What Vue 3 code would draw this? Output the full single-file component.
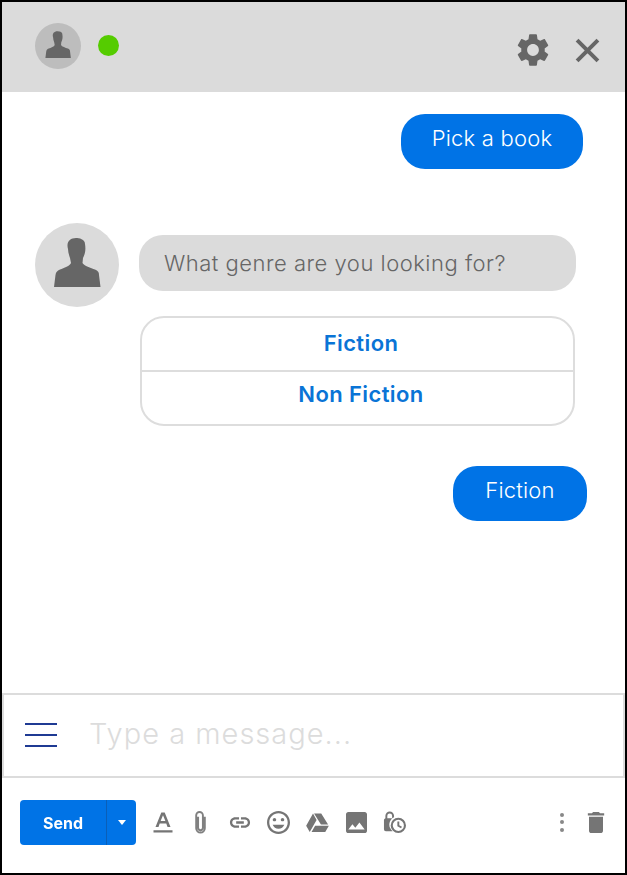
<template>
  <div class="chat">
    <header class="topbar">
      <div class="status">
        <div class="avatar small">
          <svg viewBox="0 0 84 84"><path :d="personPath" /></svg>
        </div>
        <span class="dot"></span>
      </div>
      <div class="actions">
        <svg class="gear" viewBox="2.2 2.2 19.6 19.6"><path :d="gearPath" /></svg>
        <svg class="close" viewBox="0 0 24 24"><path d="M2 2 L22 22 M22 2 L2 22" /></svg>
      </div>
    </header>

    <main class="messages">
      <div class="bubble mine first">{{ firstMessage }}</div>

      <div class="bot-row">
        <div class="avatar">
          <svg viewBox="0 0 84 84"><path :d="personPath" /></svg>
        </div>
        <div class="bot-col">
          <div class="bubble bot">What genre are you looking for?</div>
          <div class="options">
            <button v-for="opt in options" :key="opt" class="option">{{ opt }}</button>
          </div>
        </div>
      </div>

      <div class="bubble mine second">Fiction</div>
    </main>

    <div class="composer">
      <div class="burger"><span></span><span></span><span></span></div>
      <input class="field" placeholder="Type a message..." />
    </div>

    <footer class="toolbar">
      <div class="send">
        <span class="send-label">Send</span>
        <span class="send-arrow"><i></i></span>
      </div>
      <div class="tools">
        <svg style="width:20px" viewBox="0 0 20 22"><path d="M8.3 1h3.400l5.800 14.500h-3L13.300 12H6.700l-1.200 3.500h-3zM7.600 9.600h4.800L10 3.800zM0.500 18.800h19v2.200H0.500z" /></svg>
        <svg style="width:13px;margin-left:21px" viewBox="0 0 13 24"><path class="line" d="M4 6v11.500a2.500 2.500 0 0 0 5 0V4.500a3.500 3.500 0 0 0-7 0V18a4.500 4.500 0 0 0 9 0V6" /></svg>
        <svg style="width:24px;margin-left:21px" viewBox="0 0 24 24"><path d="M3.900 12c0-1.710 1.390-3.100 3.100-3.100h4V6.500H7c-3 0-5.500 2.500-5.500 5.500s2.500 5.500 5.500 5.500h4v-2.400H7c-1.710 0-3.100-1.390-3.100-3.100zM8 13.200h8v-2.400H8zM17 6.500h-4v2.400h4c1.710 0 3.100 1.390 3.100 3.100s-1.390 3.100-3.100 3.100h-4v2.400h4c3 0 5.500-2.500 5.500-5.500S20 6.500 17 6.500z" /></svg>
        <svg style="width:23px;margin-left:15px" viewBox="2 2 20 20"><path d="M11.990 2C6.470 2 2 6.480 2 12s4.470 10 9.990 10C17.520 22 22 17.520 22 12S17.520 2 11.990 2zM12 20c-4.420 0-8-3.580-8-8s3.580-8 8-8 8 3.580 8 8-3.580 8-8 8zm3.500-9c.83 0 1.500-.67 1.500-1.500S16.330 8 15.500 8 14 8.670 14 9.500s.67 1.500 1.500 1.500zm-7 0c.83 0 1.500-.67 1.500-1.500S9.330 8 8.500 8 7 8.670 7 9.500 7.670 11 8.500 11zm3.500 6.500c2.330 0 4.310-1.460 5.110-3.500H6.890c.8 2.040 2.780 3.500 5.110 3.500z" /></svg>
        <svg style="width:23px;margin-left:16px" viewBox="1 2 22 20"><path d="M7.710 3.500L1.150 15l3.430 6 6.550-11.500zM9.730 15L6.300 21h13.120l3.430-6zm12.390-1L15.570 3.500H8.700L15.290 14z" /></svg>
        <svg style="width:21px;margin-left:17px" viewBox="3 3 18 18"><path d="M21 19V5c0-1.100-.9-2-2-2H5c-1.100 0-2 .9-2 2v14c0 1.100.9 2 2 2h14c1.100 0 2-.9 2-2zM8.500 13.500l2.500 3.010L14.500 12l4.500 6H5z" /></svg>
        <svg style="width:23px;margin-left:16px" viewBox="0 0 24 24"><path fill-rule="evenodd" d="M7 0.500a4.500 4.500 0 0 1 4.500 4.500V6.500A8.500 8.500 0 0 0 10 21H3a2 2 0 0 1-2-2V9.500a2 2 0 0 1 1.500-1.900V5A4.500 4.500 0 0 1 7 0.500zM7 2.500A2.500 2.500 0 0 0 4.500 5v2.500h5V5A2.500 2.500 0 0 0 7 2.500z" /><path fill-rule="evenodd" d="M16 7a8 8 0 1 0 0 16 8 8 0 0 0 0-16zm0 2.200a5.800 5.800 0 1 1 0 11.600 5.800 5.800 0 0 1 0-11.600zM15 11v4.800l3.800 2.200 1-1.600-2.800-1.600V11z" /></svg>
      </div>
      <div class="tail">
        <div class="more"><span></span><span></span><span></span></div>
        <svg class="trash" viewBox="5 3 14 18"><path d="M6 19c0 1.100.9 2 2 2h8c1.100 0 2-.9 2-2V7H6v12zM19 4h-3.500l-1-1h-5l-1 1H5v2h14V4z" /></svg>
      </div>
    </footer>
  </div>
</template>

<script setup>
const firstMessage = 'Pick a book'
const options = ['Fiction', 'Non Fiction']

const personPath = 'M33 26C31 19 35 15 41 15C44 15 50 16 50 21C51 27 50 31 48 35L47.500 40C49 43 56 45 60 46.500C63 48 64 49 64 52L65.500 64H19L20.500 52C21 49 22 48 25 46.500C29 45 35 43 36 40L35 35C34 32 33 29 33 26Z'
const gearPath = 'M19.140 12.940c.04-.3.06-.61.06-.94 0-.32-.02-.64-.07-.94l2.030-1.580c.18-.14.23-.41.12-.61l-1.920-3.320c-.12-.22-.37-.29-.59-.22l-2.390.96c-.5-.38-1.030-.7-1.620-.94L14.400 2.810c-.04-.24-.24-.41-.48-.41h-3.840c-.24 0-.43.17-.47.41L9.250 5.350c-.59.24-1.130.57-1.620.94l-2.390-.96c-.22-.08-.47 0-.59.22L2.740 8.870c-.12.21-.08.47.12.61l2.030 1.580c-.05.3-.09.63-.09.94s.02.64.07.94l-2.030 1.580c-.18.14-.23.41-.12.61l1.920 3.320c.12.22.37.29.59.22l2.390-.96c.5.38 1.030.7 1.620.94l.36 2.540c.05.24.24.41.48.41h3.840c.24 0 .44-.17.47-.41l.36-2.540c.59-.24 1.130-.56 1.620-.94l2.390.96c.22.08.47 0 .59-.22l1.920-3.320c.12-.22.07-.47-.12-.61l-2.010-1.580zM12 15.600c-1.980 0-3.600-1.620-3.600-3.600s1.620-3.600 3.600-3.600 3.600 1.620 3.600 3.600-1.620 3.600-3.600 3.600z'
</script>

<style>
html, body {
  margin: 0;
  background: #fff;
}
</style>

<style scoped>
.chat {
  width: 627px;
  height: 875px;
  box-sizing: border-box;
  border: 2px solid #000;
  display: flex;
  flex-direction: column;
  font-family: "Inter", "Open Sans", sans-serif;
  background: #fff;
  overflow: hidden;
}
.topbar {
  height: 90px;
  background: #dbdbdb;
  display: flex;
  justify-content: space-between;
  padding: 21px 25px 0 33px;
  box-sizing: border-box;
  flex: none;
}
.status {
  display: flex;
  align-items: flex-start;
  gap: 17px;
}
.avatar {
  width: 84px;
  height: 84px;
  border-radius: 50%;
  background: #dbdbdb;
  flex: none;
}
.avatar svg {
  display: block;
  width: 100%;
  height: 100%;
  fill: #666;
}
.avatar.small {
  width: 46px;
  height: 46px;
  background: #bdbdbd;
}
.dot {
  width: 21px;
  height: 21px;
  margin-top: 12px;
  border-radius: 50%;
  background: #55cc00;
}
.actions {
  display: flex;
  align-items: center;
  gap: 26px;
  height: 44px;
  margin-top: 5px;
}
.gear {
  width: 32px;
  height: 32px;
  fill: #666;
}
.close {
  width: 25px;
  height: 25px;
  fill: none;
  stroke: #666;
  stroke-width: 3.800;
}
.messages {
  flex: 1;
  min-height: 0;
  display: flex;
  flex-direction: column;
  padding-top: 22px;
}
.bubble {
  height: 55px;
  box-sizing: border-box;
  border-radius: 24px;
  display: flex;
  align-items: center;
  font-size: 22px;
  font-weight: 300;
}
.mine {
  background: #0073e6;
  color: #fff;
  align-self: flex-end;
  justify-content: center;
  padding-bottom: 7px;
  letter-spacing: 0.2px;
}
.first {
  width: 182px;
  margin-right: 42px;
}
.second {
  width: 134px;
  margin-right: 38px;
  margin-top: 40px;
}
.bot-row {
  display: flex;
  gap: 20px;
  margin: 54px 0 0 33px;
}
.bot-col {
  padding-top: 12px;
  width: 437px;
}
.bot {
  background: #dbdbdb;
  color: #666;
  padding: 0 0 0 25px;
  height: 56px;
  letter-spacing: 0.5px;
}
.options {
  margin: 25px 1px 0;
  border: 2px solid #dddddd;
  border-radius: 24px;
  height: 110px;
  box-sizing: border-box;
  display: flex;
  flex-direction: column;
}
.option {
  height: 52px;
  flex: none;
  box-sizing: border-box;
  border: 0;
  background: none;
  font: 600 22px "Inter", "Open Sans", sans-serif;
  letter-spacing: 0.4px;
  color: #0a74d6;
  padding: 0 0 3px 7px;
}
.option + .option {
  height: 54px;
  border-top: 2px solid #dddddd;
  padding-bottom: 9px;
}
.composer {
  height: 85px;
  flex: none;
  box-sizing: border-box;
  border: 2px solid #dcdcdc;
  display: flex;
  align-items: center;
  padding-left: 21px;
}
.burger {
  width: 32px;
  display: flex;
  flex-direction: column;
  gap: 9px;
  flex: none;
  margin-bottom: 2px;
}
.burger span {
  display: block;
  height: 2px;
  background: #1f3a93;
}
.field {
  flex: 1;
  border: 0;
  outline: 0;
  margin-left: 32px;
  font: 300 29px "Inter", "Open Sans", sans-serif;
  letter-spacing: 1px;
  padding: 0 0 5px;
  min-width: 0;
  background: none;
}
.field::placeholder {
  color: #dcdcdc;
  opacity: 1;
}
.toolbar {
  height: 95px;
  flex: none;
  box-sizing: border-box;
  display: flex;
  align-items: flex-start;
  padding: 22px 20px 0 18px;
  filter: blur(0.4px);
}
.send {
  width: 116px;
  height: 45px;
  background: #0073e6;
  border-radius: 4px;
  display: flex;
  color: #fff;
  flex: none;
}
.send-label {
  width: 87px;
  box-sizing: border-box;
  border-right: 1px solid #0a5fb8;
  display: flex;
  align-items: center;
  justify-content: center;
  font-size: 16px;
  font-weight: 700;
}
.send-arrow {
  flex: 1;
  display: flex;
  align-items: center;
  justify-content: center;
}
.send-arrow i {
  width: 0;
  height: 0;
  border: 4.500px solid transparent;
  border-top: 5px solid #fff;
  border-bottom: 0;
}
.tools {
  display: flex;
  align-items: center;
  height: 44px;
  margin-left: 17px;
}
.tools svg {
  height: 23px;
  fill: #757575;
  flex: none;
}
.tools .line {
  fill: none;
  stroke: #808080;
  stroke-width: 2;
}
.tail {
  margin-left: auto;
  display: flex;
  align-items: center;
  height: 44px;
  gap: 23px;
}
.more {
  display: flex;
  flex-direction: column;
  gap: 3.500px;
}
.more span {
  width: 4px;
  height: 4px;
  border-radius: 50%;
  background: #888;
}
.trash {
  width: 18px;
  height: 21px;
  fill: #757575;
}
</style>
